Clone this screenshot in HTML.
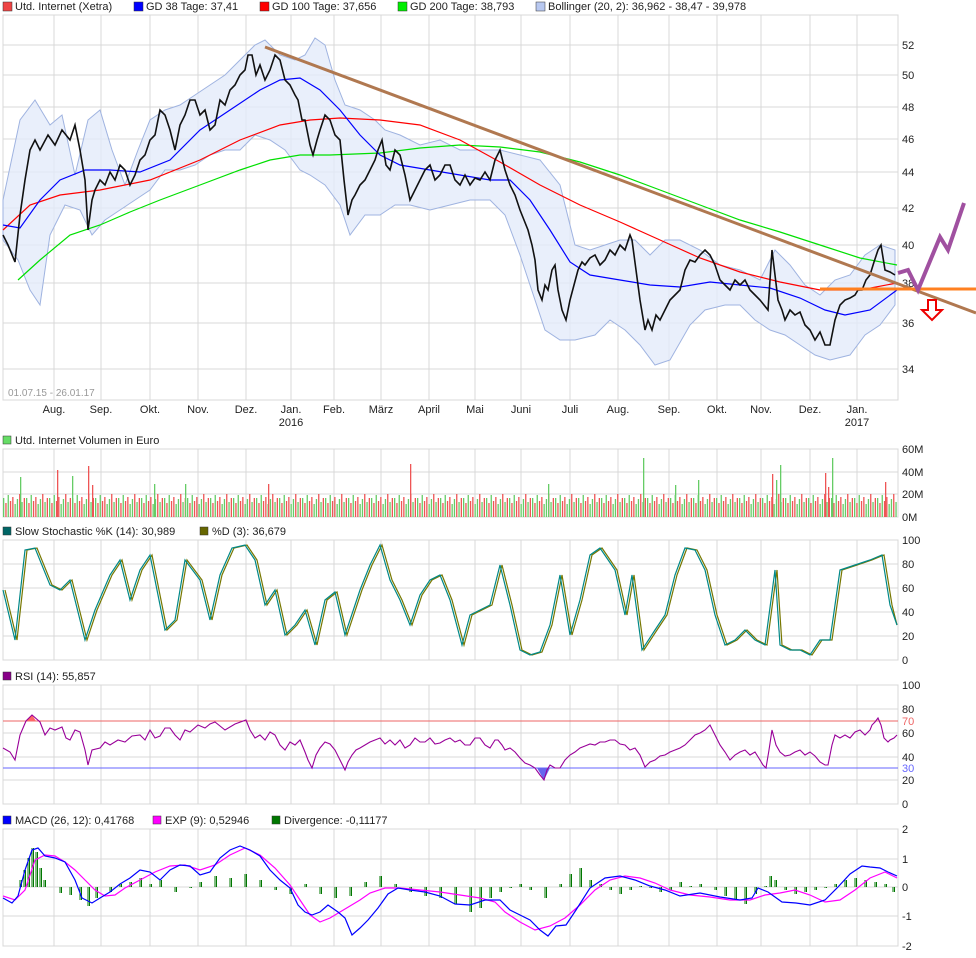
<!DOCTYPE html>
<html><head><meta charset="utf-8"><style>
body{margin:0;background:#fff;font-family:"Liberation Sans",sans-serif;}
svg{display:block}
text{font-family:"Liberation Sans",sans-serif;font-size:11px;fill:#222}
.g{stroke:#d8d8d8;stroke-width:1;fill:none}
</style></head><body>
<svg width="976" height="958" viewBox="0 0 976 958" xmlns="http://www.w3.org/2000/svg">
<defs>
<pattern id="vol" x="3" y="0" width="23" height="517" patternUnits="userSpaceOnUse">
<rect x="0" y="498" width="1.3" height="19" fill="#6c6"/>
<rect x="2.3" y="503" width="1.3" height="14" fill="#e55"/>
<rect x="4.6" y="495" width="1.3" height="22" fill="#6c6"/>
<rect x="6.9" y="501" width="1.3" height="16" fill="#e55"/>
<rect x="9.2" y="497" width="1.3" height="20" fill="#e55"/>
<rect x="11.5" y="504" width="1.3" height="13" fill="#6c6"/>
<rect x="13.8" y="499" width="1.3" height="18" fill="#6c6"/>
<rect x="16.1" y="494" width="1.3" height="23" fill="#e55"/>
<rect x="18.4" y="502" width="1.3" height="15" fill="#6c6"/>
<rect x="20.7" y="498" width="1.3" height="19" fill="#e55"/>
</pattern>
</defs>
<rect x="3" y="2" width="9" height="9" fill="#e44" stroke="#333" stroke-width=".5"/><text x="15" y="10">Utd. Internet (Xetra)</text>
<rect x="134" y="2" width="9" height="9" fill="#00f" stroke="#333" stroke-width=".5"/><text x="146" y="10">GD 38 Tage: 37,41</text>
<rect x="260" y="2" width="9" height="9" fill="#f00" stroke="#333" stroke-width=".5"/><text x="272" y="10">GD 100 Tage: 37,656</text>
<rect x="398" y="2" width="9" height="9" fill="#0e0" stroke="#333" stroke-width=".5"/><text x="410" y="10">GD 200 Tage: 38,793</text>
<rect x="536" y="2" width="9" height="9" fill="#b8c8f0" stroke="#333" stroke-width=".5"/><text x="548" y="10">Bollinger (20, 2): 36,962 - 38,47 - 39,978</text>

<g class="g">
<rect x="3" y="15" width="895" height="385"/>
<path d="M54 15V400M101 15V400M150 15V400M198 15V400M246 15V400M291 15V400M334 15V400M381 15V400M429 15V400M475 15V400M521 15V400M570 15V400M618 15V400M669 15V400M717 15V400M761 15V400M810 15V400M857 15V400"/>
<path d="M3 45H898M3 75H898M3 107H898M3 139H898M3 172H898M3 208H898M3 245H898M3 283H898M3 323H898M3 369H898"/>
</g>
<g>
<text x="902" y="49">52</text><text x="902" y="79">50</text><text x="902" y="111">48</text><text x="902" y="143">46</text><text x="902" y="176">44</text><text x="902" y="212">42</text><text x="902" y="249">40</text><text x="902" y="287">38</text><text x="902" y="327">36</text><text x="902" y="373">34</text>
</g>
<text x="8" y="396" style="fill:#999;font-size:10px">01.07.15 - 26.01.17</text>
<g text-anchor="middle">
<text x="54" y="413">Aug.</text><text x="101" y="413">Sep.</text><text x="150" y="413">Okt.</text><text x="198" y="413">Nov.</text><text x="246" y="413">Dez.</text><text x="291" y="413">Jan.</text><text x="291" y="426">2016</text><text x="334" y="413">Feb.</text><text x="381" y="413">März</text><text x="429" y="413">April</text><text x="475" y="413">Mai</text><text x="521" y="413">Juni</text><text x="570" y="413">Juli</text><text x="618" y="413">Aug.</text><text x="669" y="413">Sep.</text><text x="717" y="413">Okt.</text><text x="761" y="413">Nov.</text><text x="810" y="413">Dez.</text><text x="857" y="413">Jan.</text><text x="857" y="426">2017</text>
</g>
<path fill="#e3ebfa" fill-opacity=".8" stroke="#9fb3e0" stroke-width="1" d="M3 200 L20 120 L35 100 L50 125 L62 115 L75 175 L88 120 L100 110 L112 150 L125 185 L138 150 L150 120 L165 110 L180 105 L195 95 L210 85 L225 75 L240 60 L255 45 L265 40 L280 55 L295 60 L305 55 L315 38 L325 45 L335 80 L345 105 L360 110 L375 120 L385 130 L400 135 L420 145 L440 140 L460 150 L480 150 L500 150 L520 155 L540 160 L560 185 L575 245 L590 250 L605 245 L620 240 L635 240 L650 255 L665 240 L680 240 L700 250 L720 265 L740 270 L760 280 L775 250 L790 265 L805 285 L820 295 L835 280 L850 275 L865 255 L880 245 L895 250 L895 305 L880 325 L865 335 L850 355 L830 360 L815 355 L800 345 L785 335 L770 330 L755 320 L740 305 L725 305 L705 310 L690 325 L670 360 L655 365 L640 345 L625 330 L610 320 L595 335 L575 340 L560 340 L545 330 L530 285 L520 255 L505 215 L490 200 L470 200 L450 205 L430 210 L410 205 L395 205 L380 215 L365 215 L350 235 L340 205 L325 185 L310 175 L300 170 L285 150 L270 140 L255 135 L240 150 L225 150 L210 155 L195 165 L180 170 L165 170 L150 190 L135 200 L120 210 L105 220 L92 235 L80 210 L65 205 L50 235 L40 305 L30 290 L18 260 L3 240 Z"/>
<polyline fill="none" stroke="#00e000" stroke-width="1.2" points="18,280 40,260 70,235 100,225 130,212 160,200 200,185 240,170 270,160 300,155 330,155 380,153 420,148 460,145 500,147 540,152 580,162 620,175 660,190 700,205 740,220 780,232 820,245 860,258 897,265"/>
<polyline fill="none" stroke="#f00" stroke-width="1.2" points="3,230 30,205 60,195 100,190 150,180 200,160 240,140 280,125 310,120 340,118 380,120 420,125 460,140 500,162 540,185 580,205 620,222 660,240 700,258 740,272 780,282 820,290 860,290 897,283"/>
<polyline fill="none" stroke="#00f" stroke-width="1.2" points="3,225 20,228 40,200 60,180 85,170 110,170 140,172 170,160 200,130 230,110 260,90 280,80 300,78 320,90 340,110 360,135 380,155 400,165 430,170 460,175 490,180 510,180 530,200 550,230 570,262 590,275 620,280 650,285 680,287 710,282 740,285 770,288 800,298 825,310 845,315 870,310 897,290"/>
<polyline fill="none" stroke="#111" stroke-width="1.6" points="3,235 8,245 15,262 20,215 25,180 30,150 35,140 40,150 48,135 55,145 62,130 70,140 75,125 80,150 85,180 88,230 92,200 95,190 100,180 105,185 110,172 115,180 120,165 125,170 130,185 135,175 140,160 145,155 150,140 155,135 160,110 165,115 170,130 175,150 180,125 185,115 190,100 195,100 200,115 205,110 210,130 215,125 220,100 225,105 230,90 235,85 240,75 245,70 248,55 252,55 256,75 260,65 265,80 270,70 275,55 280,60 285,80 290,85 295,95 298,100 302,120 305,120 310,145 313,155 317,140 320,130 325,115 330,120 335,135 340,140 344,180 348,215 352,200 355,195 360,185 365,180 370,170 375,160 378,150 382,140 386,165 390,170 395,150 400,155 405,175 410,200 415,190 420,180 425,170 430,165 435,180 440,175 445,165 450,165 455,180 460,185 465,175 470,185 475,178 480,180 485,172 490,180 495,160 500,150 505,170 510,185 515,195 520,210 524,220 528,230 532,245 535,260 538,290 542,300 545,285 548,290 552,270 555,265 558,290 562,310 566,320 570,300 574,285 578,270 582,262 585,265 590,258 595,255 600,265 605,260 610,250 615,255 620,245 625,250 630,235 632,240 636,270 640,300 645,330 648,320 652,330 656,315 660,320 665,310 670,300 675,295 680,290 685,270 690,260 695,262 700,255 705,250 710,255 715,265 720,280 725,285 730,290 735,280 740,285 745,280 750,290 755,295 760,300 764,305 768,310 772,250 775,275 778,300 782,310 785,320 790,310 795,315 800,312 805,325 810,330 815,340 820,332 825,345 830,345 833,330 835,320 840,305 845,300 850,298 855,295 858,290 862,290 866,280 870,275 874,262 878,250 881,245 885,270 890,272 895,275"/>
<line x1="265" y1="47" x2="976" y2="313" stroke="#b07850" stroke-width="3"/>
<line x1="820" y1="289" x2="976" y2="289" stroke="#ff8020" stroke-width="3"/>
<polyline fill="none" stroke="#a050a0" stroke-width="4" points="898,273 908,270 918,290 940,237 948,250 964,203"/>
<path d="M928 300h8v10h6l-10 10-10-10h6z" fill="#fff" stroke="#e00" stroke-width="2"/>

<rect x="3" y="436" width="8" height="8" fill="#6d6" stroke="#333" stroke-width=".5"/><text x="15" y="444">Utd. Internet Volumen in Euro</text>
<g class="g"><rect x="3" y="449" width="895" height="68"/>
<path d="M54 449V517M101 449V517M150 449V517M198 449V517M246 449V517M291 449V517M334 449V517M381 449V517M429 449V517M475 449V517M521 449V517M570 449V517M618 449V517M669 449V517M717 449V517M761 449V517M810 449V517M857 449V517M3 472H898M3 494H898"/></g>
<rect x="3" y="449" width="894" height="68" fill="url(#vol)"/>
<g fill="#6c6"><rect x="20" y="477" width="1.3" height="40"/><rect x="72" y="476" width="1.3" height="41"/><rect x="154" y="484" width="1.3" height="33"/><rect x="185" y="484" width="1.3" height="33"/><rect x="643" y="458" width="1.3" height="59"/><rect x="780" y="465" width="1.3" height="52"/><rect x="832" y="458" width="1.3" height="59"/><rect x="675" y="485" width="1.3" height="32"/><rect x="548" y="484" width="1.3" height="33"/><rect x="698" y="480" width="1.3" height="37"/><rect x="776" y="480" width="1.3" height="37"/></g>
<g fill="#e55"><rect x="88" y="466" width="1.3" height="51"/><rect x="410" y="464" width="1.3" height="53"/><rect x="57" y="470" width="1.3" height="47"/><rect x="92" y="485" width="1.3" height="32"/><rect x="825" y="473" width="1.3" height="44"/><rect x="828" y="487" width="1.3" height="30"/><rect x="772" y="474" width="1.3" height="43"/><rect x="885" y="482" width="1.3" height="35"/><rect x="268" y="484" width="1.3" height="33"/></g>
<text x="902" y="453">60M</text><text x="902" y="476">40M</text><text x="902" y="498">20M</text><text x="902" y="521">0M</text>

<rect x="3" y="527" width="8" height="8" fill="#066" stroke="#333" stroke-width=".5"/><text x="15" y="535">Slow Stochastic %K (14): 30,989</text>
<rect x="200" y="527" width="8" height="8" fill="#660" stroke="#333" stroke-width=".5"/><text x="212" y="535">%D (3): 36,679</text>
<g class="g"><rect x="3" y="540" width="895" height="120"/>
<path d="M54 540V660M101 540V660M150 540V660M198 540V660M246 540V660M291 540V660M334 540V660M381 540V660M429 540V660M475 540V660M521 540V660M570 540V660M618 540V660M669 540V660M717 540V660M761 540V660M810 540V660M857 540V660M3 564H898M3 588H898M3 612H898M3 636H898"/></g>
<polyline fill="none" stroke="#770" stroke-width="1.2" transform="translate(2,0)" points="3,590 15,640 25,550 35,548 50,585 60,590 70,580 85,640 95,610 110,575 120,560 130,600 140,570 150,555 165,630 175,620 185,560 200,580 210,620 220,575 232,548 245,545 255,560 265,605 275,590 285,635 295,625 305,610 315,645 325,600 335,592 345,635 360,590 370,565 380,545 390,580 400,600 410,625 420,595 430,580 440,575 450,600 462,645 470,615 480,610 490,605 500,565 510,605 520,650 530,655 540,652 550,625 560,575 570,635 580,600 590,555 600,548 615,570 625,615 632,575 642,650 655,630 665,615 675,575 685,548 695,550 705,570 715,615 725,645 735,640 745,630 755,640 765,645 775,570 780,645 790,650 800,650 810,655 820,640 830,640 840,570 855,565 870,560 882,555 890,605 895,625"/>
<polyline fill="none" stroke="#088" stroke-width="1.2" points="3,590 15,640 25,550 35,548 50,585 60,590 70,580 85,640 95,610 110,575 120,560 130,600 140,570 150,555 165,630 175,620 185,560 200,580 210,620 220,575 232,548 245,545 255,560 265,605 275,590 285,635 295,625 305,610 315,645 325,600 335,592 345,635 360,590 370,565 380,545 390,580 400,600 410,625 420,595 430,580 440,575 450,600 462,645 470,615 480,610 490,605 500,565 510,605 520,650 530,655 540,652 550,625 560,575 570,635 580,600 590,555 600,548 615,570 625,615 632,575 642,650 655,630 665,615 675,575 685,548 695,550 705,570 715,615 725,645 735,640 745,630 755,640 765,645 775,570 780,645 790,650 800,650 810,655 820,640 830,640 840,570 855,565 870,560 882,555 890,605 897,625"/>
<text x="902" y="544">100</text><text x="902" y="568">80</text><text x="902" y="592">60</text><text x="902" y="616">40</text><text x="902" y="640">20</text><text x="902" y="664">0</text>

<rect x="3" y="672" width="8" height="8" fill="#808" stroke="#333" stroke-width=".5"/><text x="15" y="680">RSI (14): 55,857</text>
<g class="g"><rect x="3" y="685" width="895" height="119"/>
<path d="M54 685V804M101 685V804M150 685V804M198 685V804M246 685V804M291 685V804M334 685V804M381 685V804M429 685V804M475 685V804M521 685V804M570 685V804M618 685V804M669 685V804M717 685V804M761 685V804M810 685V804M857 685V804M3 709H898M3 733H898M3 757H898M3 780H898"/></g>
<line x1="3" y1="721" x2="898" y2="721" stroke="#e66" stroke-width="1"/>
<line x1="3" y1="768" x2="898" y2="768" stroke="#66f" stroke-width="1"/>
<path d="M26 721 L32 715 L36 721Z" fill="#f66"/>
<path d="M537 768 L544 780 L550 768Z" fill="#66e"/>
<polyline fill="none" stroke="#909" stroke-width="1.1" points="3,748 10,752 15,760 20,735 26,721 32,715 40,722 45,735 50,728 55,730 62,727 66,738 70,740 75,730 80,732 85,750 88,765 92,750 100,748 105,742 110,745 118,740 125,742 132,736 140,735 145,740 150,730 155,738 160,736 165,728 170,728 175,735 180,740 185,730 190,732 198,725 205,728 210,724 215,722 225,730 235,724 246,720 250,730 255,738 260,735 265,740 270,732 275,735 280,745 285,750 290,742 295,745 300,740 305,752 308,760 312,768 316,755 320,748 325,742 330,744 335,750 340,760 345,770 348,762 352,755 356,750 360,748 365,745 370,742 375,740 380,738 385,744 390,740 395,745 400,740 405,748 410,745 415,738 420,742 425,742 430,738 435,744 440,743 445,740 450,738 455,742 460,740 465,745 470,745 475,738 480,738 485,745 490,748 495,740 498,740 502,745 505,750 510,748 515,752 520,758 525,763 530,765 535,768 540,775 544,780 547,770 550,765 555,768 560,768 565,760 570,755 575,752 580,748 585,746 590,744 595,745 600,742 605,742 610,740 615,740 620,744 625,745 630,750 635,748 640,755 645,767 650,762 655,760 660,756 665,755 670,752 675,750 680,748 685,745 690,740 695,735 700,733 705,730 710,725 715,735 720,745 725,752 730,760 735,755 740,752 745,750 750,755 755,752 760,760 763,765 766,768 769,750 772,730 776,745 780,752 785,756 790,755 795,752 800,750 805,755 810,752 815,756 820,762 825,765 828,765 832,745 835,735 840,738 845,735 850,738 855,732 860,730 865,735 870,730 872,725 875,722 878,718 881,725 884,738 888,742 890,740 894,738 897,735"/>
<text x="902" y="689">100</text><text x="902" y="713">80</text><text x="902" y="725" style="fill:#e66">70</text><text x="902" y="737">60</text><text x="902" y="761">40</text><text x="902" y="772" style="fill:#66f">30</text><text x="902" y="784">20</text><text x="902" y="808">0</text>

<rect x="3" y="816" width="8" height="8" fill="#00f" stroke="#333" stroke-width=".5"/><text x="15" y="824">MACD (26, 12): 0,41768</text>
<rect x="153" y="816" width="8" height="8" fill="#f0f" stroke="#333" stroke-width=".5"/><text x="165" y="824">EXP (9): 0,52946</text>
<rect x="272" y="816" width="8" height="8" fill="#070" stroke="#333" stroke-width=".5"/><text x="284" y="824">Divergence: -0,11177</text>
<g class="g"><rect x="3" y="829" width="895" height="117"/>
<path d="M54 829V946M101 829V946M150 829V946M198 829V946M246 829V946M291 829V946M334 829V946M381 829V946M429 829V946M475 829V946M521 829V946M570 829V946M618 829V946M669 829V946M717 829V946M761 829V946M810 829V946M857 829V946M3 859H898M3 887H898M3 916H898"/></g>
<g stroke="#070" stroke-width="1">
<path id="hist" d="M20 887V880M24 887V870M28 887V858M32 887V848M36 887V852M40 887V868M44 887V880M60 887V893M70 887V895M80 887V900M88 887V906M96 887V898M110 887V892M120 887V884M130 887V882M140 887V878M150 887V884M160 887V880M175 887V892M190 887V888M200 887V882M215 887V876M230 887V878M245 887V874M260 887V880M275 887V890M290 887V894M305 887V884M320 887V894M335 887V898M350 887V896M365 887V882M380 887V876M395 887V884M410 887V892M425 887V896M440 887V898M455 887V904M470 887V912M480 887V908M490 887V898M500 887V892M510 887V888M520 887V884M530 887V890M545 887V898M560 887V884M570 887V874M580 887V868M590 887V880M600 887V884M610 887V890M620 887V894M630 887V890M640 887V886M650 887V888M660 887V892M670 887V890M680 887V882M690 887V886M700 887V884M715 887V890M725 887V896M735 887V900M745 887V904M755 887V894M765 887V886M770 887V876M775 887V880M785 887V890M795 887V894M805 887V892M815 887V890M825 887V888M835 887V884M845 887V880M855 887V878M865 887V880M875 887V882M885 887V884M893 887V892"/>
<use href="#hist" x="1.5"/>
</g>
<polyline fill="none" stroke="#f0f" stroke-width="1.2" points="3,896 15,900 25,890 35,860 45,855 55,856 65,862 75,870 85,880 95,890 105,896 115,895 125,888 140,880 155,872 170,866 185,865 200,870 215,865 230,855 245,848 260,855 275,868 290,885 300,900 310,915 320,922 330,918 340,912 350,906 360,900 370,893 385,888 400,888 420,890 440,892 460,895 480,898 495,902 505,912 520,922 535,930 550,926 565,918 580,905 595,890 610,880 625,876 640,878 655,883 670,890 690,895 710,897 730,900 750,900 765,895 780,893 795,890 810,895 825,902 840,900 855,890 870,878 885,872 897,878"/>
<polyline fill="none" stroke="#00f" stroke-width="1.2" points="3,898 12,903 18,896 25,870 32,850 38,848 45,856 55,858 65,862 75,880 82,898 92,903 100,898 110,892 120,884 130,878 140,870 150,872 160,880 170,870 180,865 190,866 200,875 210,872 220,858 230,850 240,846 250,850 260,856 270,870 280,880 290,888 298,905 305,912 312,915 320,912 328,905 338,912 345,918 352,935 360,928 368,920 378,908 388,894 398,888 410,890 425,892 440,896 455,904 470,905 485,900 500,900 510,910 520,915 530,920 540,930 548,936 556,926 566,925 576,910 590,888 605,878 620,876 635,880 650,886 665,890 680,896 700,893 720,897 740,900 752,898 758,888 768,892 782,902 796,903 810,905 825,900 838,887 850,874 862,866 870,867 880,868 888,872 897,876"/>
<text x="902" y="833">2</text><text x="902" y="863">1</text><text x="902" y="891">0</text><text x="902" y="920">-1</text><text x="902" y="950">-2</text>
</svg>
</body></html>
